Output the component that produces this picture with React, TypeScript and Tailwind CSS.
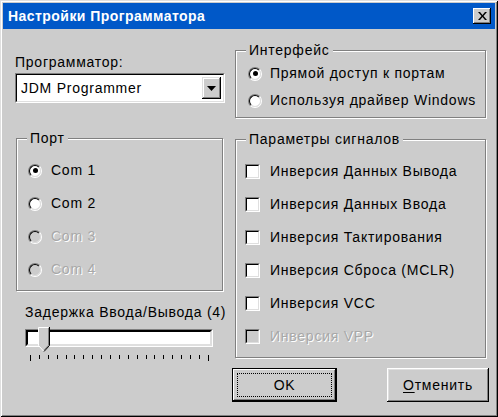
import React from "react";

function Radio({ checked, disabled }: { checked?: boolean; disabled?: boolean }) {
  return (
    <div className="w-[14px] h-[14px] rounded-full border border-t-[#808080] border-l-[#808080] border-b-white border-r-white shrink-0">
      <div
        className={`w-full h-full rounded-full border border-t-black border-l-black border-b-[#dfdfdf] border-r-[#dfdfdf] flex items-center justify-center ${
          disabled ? "bg-[#cccccc]" : "bg-white"
        }`}
      >
        {checked && <div className="w-[5px] h-[5px] rounded-full bg-black" />}
      </div>
    </div>
  );
}

function Check({ disabled }: { disabled?: boolean }) {
  return (
    <div className="w-[15px] h-[15px] border border-t-[#808080] border-l-[#808080] border-b-white border-r-white shrink-0">
      <div
        className={`w-full h-full border border-t-black border-l-black border-b-[#dfdfdf] border-r-[#dfdfdf] ${
          disabled ? "bg-[#cccccc]" : "bg-white"
        }`}
      />
    </div>
  );
}

function Group({
  title,
  className,
  children,
}: {
  title: string;
  className: string;
  children: React.ReactNode;
}) {
  return (
    <div
      className={`relative border border-[#808080] shadow-[inset_1px_1px_0_#fff,1px_1px_0_#fff] ${className}`}
    >
      <span className="absolute -top-[9px] left-[10px] bg-[#cccccc] px-[3px] leading-[16px] whitespace-nowrap">
        {title}
      </span>
      {children}
    </div>
  );
}

const disabledText = "text-[#a8a8a8] [text-shadow:1px_1px_0_#ffffff]";

export default function App() {
  const ticks = Array.from({ length: 21 }, (_, i) => i);
  return (
    <div className="w-[498px] h-[417px] bg-[#cccccc] p-[3px] shadow-[inset_1px_1px_0_#dfdfdf,inset_-1px_-1px_0_#000,inset_2px_2px_0_#fff,inset_-2px_-2px_0_#808080] font-['Liberation_Sans',Arial,sans-serif] text-[14px] tracking-[0.75px] text-black select-none overflow-hidden">
      {/* Title bar */}
      <div className="h-[26px] bg-[#0058c8] flex items-center pl-[5px] pr-[3px]">
        <span className="text-white font-bold text-[14px] tracking-[0.45px] leading-none">
          Настройки Программатора
        </span>
        <div className="ml-auto mr-[1px] w-[18px] h-[16px] bg-[#cccccc] shadow-[inset_-1px_-1px_0_#000,inset_1px_1px_0_#fff,inset_-2px_-2px_0_#808080] flex items-center justify-center">
          <svg width="9" height="8" viewBox="0 0 9 8">
            <path d="M0 0h2l2.5 3 2.5-3h2l-3.5 4 3.5 4h-2l-2.5-3-2.5 3h-2l3.5-4z" fill="#000" />
          </svg>
        </div>
      </div>

      {/* Body */}
      <div className="flex pl-[12px]">
        {/* Left column */}
        <div className="w-[210px] flex flex-col">
          <div className="mt-[25px] leading-[16px] h-[16px]">Программатор:</div>
          <div className="mt-[3px] h-[30px] border border-t-[#808080] border-l-[#808080] border-b-white border-r-white">
            <div className="h-full border border-t-black border-l-black border-b-[#dfdfdf] border-r-[#dfdfdf] bg-white flex items-center pl-[4px] pr-[2px]">
              <span className="leading-none">JDM Programmer</span>
              <div className="ml-auto w-[19px] h-[22px] bg-[#cccccc] shadow-[inset_-1px_-1px_0_#000,inset_1px_1px_0_#dfdfdf,inset_-2px_-2px_0_#808080,inset_2px_2px_0_#fff] flex items-center justify-center">
                <svg width="9" height="5" viewBox="0 0 9 5">
                  <path d="M0 0h9L4.5 5z" fill="#000" />
                </svg>
              </div>
            </div>
          </div>

          <Group title="Порт" className="mt-[35px] h-[153px] w-[207px] ml-[1px] pt-[15px]">
            {[
              { t: "Com 1", c: true, d: false },
              { t: "Com 2", c: false, d: false },
              { t: "Com 3", c: false, d: true },
              { t: "Com 4", c: false, d: true },
            ].map((r) => (
              <div key={r.t} className="h-[33px] flex items-center pl-[11px] gap-[9px]">
                <Radio checked={r.c} disabled={r.d} />
                <span className={r.d ? disabledText : ""}>{r.t}</span>
              </div>
            ))}
          </Group>

          <div className="mt-[13px] pl-[10px] leading-[16px] h-[16px] whitespace-nowrap">
            Задержка Ввода/Вывода (4)
          </div>
          <div className="relative mt-[9px] ml-[10px] w-[188px] h-[18px] border border-t-[#808080] border-l-[#808080] border-b-white border-r-white">
            <div className="h-full border-2 border-t-black border-l-black border-b-[#dfdfdf] border-r-[#dfdfdf] bg-white" />
            <svg
              className="absolute left-[12px] -top-[3px]"
              width="12"
              height="25"
              viewBox="0 0 12 25"
            >
              <path d="M0.5 0.5h11v18l-5.5 6l-5.5-6z" fill="#cccccc" />
              <path d="M0.5 18.5v-18h10" stroke="#ffffff" fill="none" />
              <path d="M11.5 0v18.5l-5.5 6" stroke="#000" fill="none" />
              <path d="M10.5 1v17.2l-4.5 5" stroke="#808080" fill="none" />
              <path d="M0.5 18.5l5 5.5" stroke="#ffffff" fill="none" />
            </svg>
          </div>
          <div className="mt-[8px] ml-[15px] w-[179px] flex justify-between items-start">
            {ticks.map((i) => (
              <div
                key={i}
                className={`w-[1px] bg-black ${i === 0 || i === 20 ? "h-[6px]" : "h-[4px]"}`}
              />
            ))}
          </div>
        </div>

        {/* Right column */}
        <div className="ml-[10px] w-[254px] flex flex-col">
          <Group title="Интерфейс" className="mt-[21px] h-[68px] w-[251px] pt-[9px]">
            <div className="h-[27px] flex items-center pl-[12px] gap-[8px]">
              <Radio checked />
              <span className="whitespace-nowrap">Прямой доступ к портам</span>
            </div>
            <div className="h-[27px] flex items-center pl-[12px] gap-[8px]">
              <Radio />
              <span className="whitespace-nowrap">Используя драйвер Windows</span>
            </div>
          </Group>

          <Group title="Параметры сигналов" className="mt-[21px] h-[219px] w-[251px] pt-[15px]">
            {[
              { t: "Инверсия Данных Вывода", d: false },
              { t: "Инверсия Данных Ввода", d: false },
              { t: "Инверсия Тактирования", d: false },
              { t: "Инверсия Сброса (MCLR)", d: false },
              { t: "Инверсия VCC", d: false },
              { t: "Инверсия VPP", d: true },
            ].map((r) => (
              <div key={r.t} className="h-[33px] flex items-center pl-[9px] gap-[10px]">
                <Check disabled={r.d} />
                <span className={`whitespace-nowrap ${r.d ? disabledText : ""}`}>{r.t}</span>
              </div>
            ))}
          </Group>

          <div className="mt-[10px] -ml-[3px] flex gap-[50px]">
            <div className="w-[105px] h-[34px] border border-black bg-[#cccccc] shadow-[inset_-1px_-1px_0_#000,inset_1px_1px_0_#fff,inset_-2px_-2px_0_#808080] p-[4px]">
              <div className="h-full border border-dotted border-black flex items-center justify-center">
                <span>OK</span>
              </div>
            </div>
            <div className="w-[102px] h-[34px] bg-[#cccccc] shadow-[inset_-1px_-1px_0_#000,inset_1px_1px_0_#fff,inset_-2px_-2px_0_#808080,inset_2px_2px_0_#dfdfdf] flex items-center justify-center">
              <span>
                <span className="underline underline-offset-2">О</span>тменить
              </span>
            </div>
          </div>
        </div>
      </div>
    </div>
  );
}
